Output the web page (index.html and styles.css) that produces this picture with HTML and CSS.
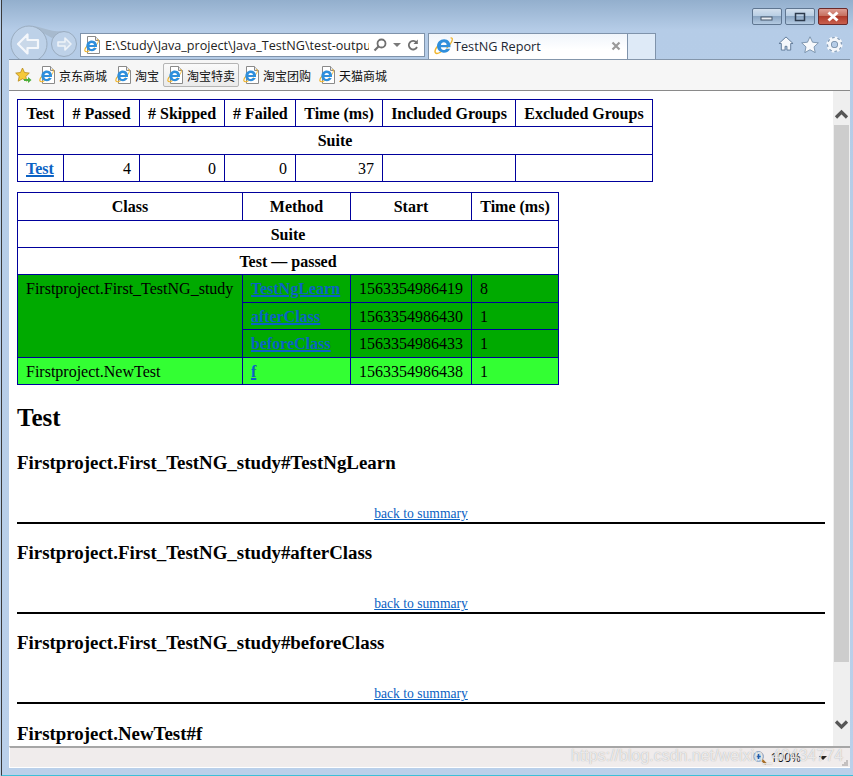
FILE: index.html
```html
<!DOCTYPE html>
<html lang="en">
<head>
<meta charset="utf-8">
<title>TestNG Report</title>
<link rel="stylesheet" href="styles.css">
</head>
<body>
<svg class="defs" width="0" height="0" aria-hidden="true">
  <defs>
    <symbol id="ie" viewBox="0 0 20 20">
      <path d="M17.5 2.2c1.6-.7 2.4.8 1.2 3.6-1 2.4-3 5-5.5 7" fill="none" stroke="#f0b429" stroke-width="1.3"/>
      <path d="M5 9.5C2.2 12.5.4 16 1.5 17.6c1 1.3 3.6.6 6-1" fill="none" stroke="#f0b429" stroke-width="1.5"/>
      <path d="M10.6 3.4c-4.2 0-7.4 3.2-7.4 7.2 0 4.200 3.200 6.900 7.200 6.900 3.100 0 5.500-1.500 6.600-4.200h-4.200c-.6.900-1.500 1.400-2.500 1.400-1.700 0-3-1.100-3.100-2.800h10.100c.7-4.800-2.400-8.500-6.700-8.500zM7.300 9.400c.2-1.500 1.500-2.700 3.100-2.700s2.800 1.100 2.900 2.700z" fill="#2f8fdc"/>
    </symbol>
    <symbol id="pageie" viewBox="0 0 16 18">
      <path d="M3.500 .5h8l4 4v13h-12z" fill="#fff" stroke="#8a8a8a"/>
      <path d="M11.500 .5v4h4" fill="#e6e6e6" stroke="#8a8a8a"/>
      <use href="#ie" x="0" y="2" width="15" height="15"/>
    </symbol>
  </defs>
</svg>
<div class="window">
  <header class="chrome">
    <div class="caption">
      <span class="capbtn"><svg width="14" height="8" viewBox="0 0 14 8"><rect x="1" y="4" width="11" height="3" fill="#e8edf3" stroke="#46566a"/></svg></span>
      <span class="capbtn"><svg width="14" height="10" viewBox="0 0 14 10"><rect x="2.500" y="1.500" width="9" height="7" fill="none" stroke="#2c3a4c" stroke-width="1.500"/></svg></span>
      <span class="capbtn capclose"><svg width="14" height="11" viewBox="0 0 14 11"><path d="M2.500 1.500l9 8M11.500 1.500l-9 8" stroke="#fff" stroke-width="3"/></svg></span>
    </div>
    <div class="navrow">
      <svg class="navbtns" width="69" height="38" viewBox="0 0 69 38">
        <path d="M19 1C32 1 38 7 54 6.500L42 13 33 8z" fill="#a7bace"/>
        <circle cx="19" cy="19" r="18" fill="#bdd1e8" stroke="#9aacbf"/>
        <path d="M8 19l9.500-9.500v5.500h10.500v8H17.500v5.500z" fill="#c9d8e9" stroke="#f4f7fb" stroke-width="2.200" stroke-linejoin="round"/>
        <circle cx="54" cy="19" r="12.500" fill="#bdd1e8" stroke="#9aacbf"/>
        <path d="M61 19l-6-6v4h-7v4h7v4z" fill="#c9d8e9" stroke="#eef3f8" stroke-width="1.600" stroke-linejoin="round"/>
      </svg>
      <div class="addr">
        <svg class="addricon" width="16" height="18"><use href="#pageie"/></svg>
        <span class="addrtext">E:\Study\Java_project\Java_TestNG\test-output</span>
        <svg class="addrsearch" width="14" height="14" viewBox="0 0 14 14"><circle cx="8.500" cy="5.500" r="4" fill="none" stroke="#6f6f6f" stroke-width="1.800"/><path d="M5.500 8.500L1.500 12.500" stroke="#6f6f6f" stroke-width="2.200"/></svg>
        <span class="caret"></span>
        <svg width="12" height="13" viewBox="0 0 12 13"><path d="M10 8a4.300 4.300 0 1 1-.6-4.600" fill="none" stroke="#6f6f6f" stroke-width="1.800"/><path d="M10.800 .5v4.500H6.500z" fill="#6f6f6f"/></svg>
      </div>
      <div class="tab">
        <svg width="19" height="19"><use href="#ie"/></svg>
        <span class="tabtitle">TestNG Report</span>
        <svg width="10" height="10" viewBox="0 0 10 10"><path d="M1.500 1.500l7 7M8.500 1.500l-7 7" stroke="#9a9a9a" stroke-width="2.200"/></svg>
      </div>
      <div class="newtab"></div>
      <div class="tools">
        <svg width="16" height="15" viewBox="0 0 17 16"><path d="M8.500 1L1 8h2.500v7h4v-4h2v4h4V8H16z" fill="#f4f7fb" stroke="#5f7a97"/></svg>
        <svg width="18" height="17" viewBox="0 0 18 17"><path d="M9 .8l2.500 5.400 5.800.7-4.300 4 1.200 5.700L9 13.700l-5.200 2.900L5 10.900.7 6.900l5.800-.7z" fill="#f7f9fc" stroke="#5f7a97" stroke-width=".7"/></svg>
        <svg width="17" height="17" viewBox="0 0 17 17"><circle cx="8.500" cy="8.500" r="5" fill="none" stroke="#6f88a3" stroke-width="4.600"/><circle cx="8.500" cy="8.500" r="5" fill="none" stroke="#f4f7fb" stroke-width="3"/><circle cx="8.500" cy="8.500" r="6.800" fill="none" stroke="#f4f7fb" stroke-width="2.600" stroke-dasharray="2.700 2.640"/></svg>
      </div>
    </div>
  </header>
  <nav class="favbar">
    <svg class="favstar" width="17" height="17" viewBox="0 0 17 17"><path d="M7.500 1l2 4.500 4.800.6-3.500 3.300 1 4.800-4.300-2.400-4.300 2.400 1-4.800L.7 6.100l4.800-.6z" fill="#f5c93a" stroke="#b98a17" stroke-width=".8"/><path d="M9 12h4v-2l3.500 3-3.500 3v-2H9z" fill="#4caf3e"/></svg>
    <a class="fav"><svg width="16" height="18"><use href="#pageie"/></svg>京东商城</a>
    <a class="fav"><svg width="16" height="18"><use href="#pageie"/></svg>淘宝</a>
    <a class="fav fav-active"><svg width="16" height="18"><use href="#pageie"/></svg>淘宝特卖</a>
    <a class="fav"><svg width="16" height="18"><use href="#pageie"/></svg>淘宝团购</a>
    <a class="fav"><svg width="16" height="18"><use href="#pageie"/></svg>天猫商城</a>
  </nav>
  <div class="viewport">
    <main class="page">
      <table class="report summary">
        <colgroup><col class="w46"><col class="w76"><col class="w85"><col class="w71"><col class="w87"><col class="w133"><col class="w137"></colgroup>
        <tr><th>Test</th><th># Passed</th><th># Skipped</th><th># Failed</th><th>Time (ms)</th><th>Included Groups</th><th>Excluded Groups</th></tr>
        <tr><th colspan="7">Suite</th></tr>
        <tr><td><a href="#t"><b>Test</b></a></td><td class="num">4</td><td class="num">0</td><td class="num">0</td><td class="num">37</td><td></td><td></td></tr>
      </table>
      <table class="report methods">
        <colgroup><col class="w225"><col class="w108"><col class="w121"><col class="w87"></colgroup>
        <tr><th>Class</th><th>Method</th><th>Start</th><th>Time (ms)</th></tr>
        <tr><th colspan="4">Suite</th></tr>
        <tr><th colspan="4">Test — passed</th></tr>
        <tr class="odd"><td rowspan="3">Firstproject.First_TestNG_study</td><td><a href="#a"><b>TestNgLearn</b></a></td><td>1563354986419</td><td>8</td></tr>
        <tr class="odd"><td><a href="#b"><b>afterClass</b></a></td><td>1563354986430</td><td>1</td></tr>
        <tr class="odd"><td><a href="#c"><b>beforeClass</b></a></td><td>1563354986433</td><td>1</td></tr>
        <tr class="even"><td>Firstproject.NewTest</td><td><a href="#d"><b>f</b></a></td><td>1563354986438</td><td>1</td></tr>
      </table>
      <h2>Test</h2>
      <section class="result">
        <h3>Firstproject.First_TestNG_study#TestNgLearn</h3>
        <p class="totop"><a href="#s">back to summary</a></p>
        <hr>
      </section>
      <section class="result">
        <h3>Firstproject.First_TestNG_study#afterClass</h3>
        <p class="totop"><a href="#s">back to summary</a></p>
        <hr>
      </section>
      <section class="result">
        <h3>Firstproject.First_TestNG_study#beforeClass</h3>
        <p class="totop"><a href="#s">back to summary</a></p>
        <hr>
      </section>
      <section class="result">
        <h3>Firstproject.NewTest#f</h3>
      </section>
    </main>
    <aside class="scrollbar">
      <svg width="17" height="34" viewBox="0 0 17 34"><path d="M3 26.500l5.500-5.500 5.500 5.500" fill="none" stroke="#565656" stroke-width="3.200"/></svg>
      <div class="thumb"></div>
      <div class="track"></div>
      <svg width="17" height="30" viewBox="0 0 17 30"><path d="M3 5.500l5.500 5.500 5.500-5.500" fill="none" stroke="#565656" stroke-width="3.200"/></svg>
    </aside>
  </div>
  <footer class="status">
    <svg width="14" height="14" viewBox="0 0 14 14"><path d="M8 8l5 5" stroke="#a8702a" stroke-width="2.400"/><circle cx="5.500" cy="5.500" r="4.800" fill="#dcebfa" stroke="#6f93bd"/><path d="M5.500 3v5M3 5.500h5" stroke="#1c5fae" stroke-width="1.600"/></svg>
    <span class="zoomval">100%</span>
    <span class="caret caret-dark"></span>
    <span class="watermark">https://blog.csdn.net/weixin_40434774</span>
    <svg class="grip" width="6" height="6" viewBox="0 0 6 6"><path d="M4 0h2v2H4zM2 2h2v2H2zM4 2h2v2H4zM0 4h2v2H0zM2 4h2v2H2zM4 4h2v2H4z" fill="#c4c0c0"/></svg>
  </footer>
</div>
</body>
</html>
```
FILE: styles.css
```css
* { box-sizing: border-box; }
html, body { margin: 0; padding: 0; }
body { width: 853px; height: 776px; overflow: hidden; background: #b9cfe9; }
.defs { position: absolute; }

.window {
  width: 852px; height: 776px; margin-left: 1px;
  padding: 0 3px 7px 7px;
  display: flex; flex-direction: column;
  border-left: 1px solid #3a3a3a;
  border-bottom: 1px solid #3cc0d8;
  background: linear-gradient(#93afcd 0, #b5cce7 30px, #bad0ea 100%);
}

/* title / nav chrome */
.chrome { height: 59px; flex: none; display: flex; flex-direction: column; }
.caption { height: 25px; flex: none; padding: 8px 2px 0 0; display: flex; justify-content: flex-end; gap: 3px; }
.capbtn {
  width: 30px; height: 17px; display: flex; align-items: center; justify-content: center;
  border: 1px solid #5f7691; border-radius: 2px;
  background: linear-gradient(#d3e0ee 0, #b9cee4 45%, #8ba6c3 50%, #b5cbe2 100%);
}
.capclose { border-color: #6b2a2a; background: linear-gradient(#dd9d93 0, #c6705f 45%, #b03a2a 50%, #c9604e 100%); }
.navrow { flex: 1; display: flex; align-items: flex-end; padding-left: 1px; }
.navbtns { margin-bottom: -3px; flex: none; }
.addr {
  width: 345px; height: 24px; margin: 0 3px 3px 1px; padding: 0 5px 0 3px;
  display: flex; align-items: center; flex: none;
  background: #fff; border: 1px solid #7f93ab;
  color: #222;
}
.addricon { flex: none; margin-right: 5px; }
.addrtext { width: 264px; overflow: hidden; white-space: nowrap; flex: none; font: 12.6px "Open Sans", sans-serif; }
.addrsearch { margin-left: 4px; flex: none; }
.caret { width: 0; height: 0; margin: 0 6px; border: 4px solid transparent; border-top: 4px solid #7a7a7a; border-bottom: 0; }
.tab {
  width: 200px; height: 27px; flex: none; padding: 0 6px 3px 5px;
  display: flex; align-items: center; gap: 1px;
  border: 1px solid #7f93ab; border-bottom: 0;
  background: linear-gradient(#f0f5fb, #fff 60%);
  font: 12.7px "Open Sans", sans-serif; color: #1c2733;
}
.tabtitle { flex: 1; }
.newtab { width: 29px; height: 27px; flex: none; margin-left: -1px; border: 1px solid #7f93ab; border-bottom: 0; background: #deeaf7; }
.tools { margin-left: auto; align-self: flex-start; margin-top: 11px; padding-right: 7px; display: flex; gap: 7px; align-items: flex-start; }

/* favourites bar */
.favbar {
  height: 32px; flex: none; padding: 0 0 0 6px;
  display: flex; align-items: center;
  background: #f6f6f6; border-top: 1px solid #8496ab; border-bottom: 1px solid #8a8a8a;
  font: 12px "Noto Sans CJK SC", sans-serif; color: #111;
}
.favstar { flex: none; margin-right: 3px; }
.fav { display: flex; align-items: center; gap: 4px; height: 24px; padding: 0 3px; border: 1px solid transparent; border-radius: 2px; }
.fav-active { border-color: #b5b5b5; background: linear-gradient(#fafafa, #eaeaea); }

/* page viewport */
.viewport { flex: 1; min-height: 0; display: flex; background: #fff; overflow: hidden; }
.page { flex: 1; min-width: 0; overflow: hidden; padding: 8px; font: 16px "Liberation Serif", serif; color: #000; }
.scrollbar { width: 17px; flex: none; display: flex; flex-direction: column; background: #efefef; }
.scrollbar svg { flex: none; }
.thumb { height: 537px; flex: none; margin: 0 1px; background: #cdcdcd; }
.track { flex: 1; }

/* report tables */
.report { border-collapse: collapse; table-layout: fixed; border: 1px solid #00009c; margin: 0 0 10px; }
.summary { width: 636px; }
.methods { width: 542px; }
.w46 { width: 46px; } .w76 { width: 76px; } .w85 { width: 85px; } .w71 { width: 71px; }
.w87 { width: 87px; } .w133 { width: 133px; } .w137 { width: 137px; }
.w225 { width: 225px; } .w108 { width: 108px; } .w121 { width: 121px; }
.report th, .report td { border: 1px solid #00009c; padding: 5px 8px 3.4px; line-height: 18px; white-space: nowrap; }
.report td { vertical-align: top; }
.report a { color: #0b62c4; text-decoration-thickness: 2px; }
.num { text-align: right; }
.odd td { background: #00aa00; }
.even td { background: #33ff33; }

h2 { font-size: 25px; line-height: 28px; margin: 19px 0 0; }
.result h3 { font-size: 18.9px; line-height: 22px; margin: 0; }
h2 + .result h3 { margin-top: 20px; }
.totop { margin: 32px 0 0; font-size: 13.6px; line-height: 16px; text-align: center; }
.totop a { color: #0b62c4; }
hr { height: 2px; margin: 0 0 18.25px; border: 0; background: #000; }

/* status bar */
.status {
  height: 22px; flex: none; position: relative; padding: 0 23px 0 0;
  display: flex; align-items: center; justify-content: flex-end;
  background: #f0ecec; border-top: 2px solid #a6a6a6; border-bottom: 1px solid #fff; border-left: 1px solid #fff;
  font: 12px "Open Sans", sans-serif; color: #111;
}
.zoomval { margin: 0 18px 0 3px; }
.caret-dark { border-top-color: #222; margin: 0; }
.watermark {
  position: absolute; left: 561px; top: -1px;
  font: 16px "Liberation Sans", sans-serif; color: rgba(255,255,255,.75);
  text-shadow: 0 0 1px rgba(110,110,110,.6); white-space: nowrap;
}
.grip { position: absolute; right: 2px; bottom: 1px; }
```
